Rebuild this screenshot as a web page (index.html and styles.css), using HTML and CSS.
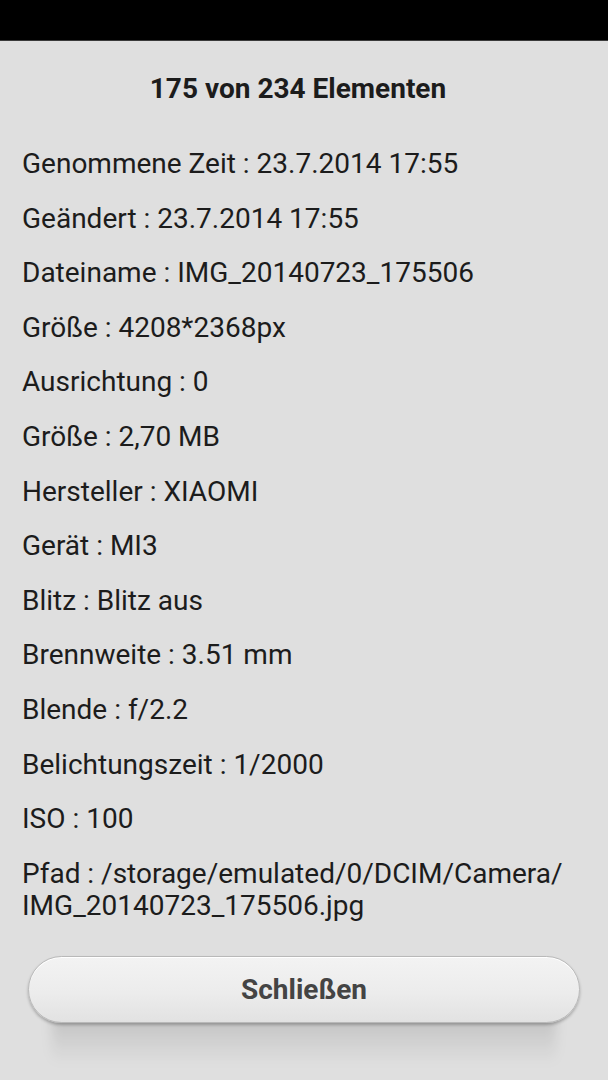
FILE: index.html
```html
<!DOCTYPE html>
<html lang="de">
<head>
  <meta charset="UTF-8" />
  <meta name="viewport" content="width=device-width, initial-scale=1" />
  <title>Details</title>
  <link rel="stylesheet" href="styles.css">
</head>
<body>
  <div class="status-bar"></div>
  <main class="dialog">
    <h1 class="title">175 von 234 Elementen</h1>
    <ul class="details">
      <li>Genommene Zeit : 23.7.2014 17:55</li>
      <li>Geändert : 23.7.2014 17:55</li>
      <li>Dateiname : IMG_20140723_175506</li>
      <li>Größe : 4208*2368px</li>
      <li>Ausrichtung : 0</li>
      <li>Größe : 2,70 MB</li>
      <li>Hersteller : XIAOMI</li>
      <li>Gerät : MI3</li>
      <li>Blitz : Blitz aus</li>
      <li>Brennweite : 3.51 mm</li>
      <li>Blende : f/2.2</li>
      <li>Belichtungszeit : 1/2000</li>
      <li>ISO : 100</li>
      <li>Pfad : /storage/emulated/0/DCIM/Camera/<br>IMG_20140723_175506.jpg</li>
    </ul>
    <div class="actions">
      <button class="close-btn" type="button">Schließen</button>
    </div>
  </main>
</body>
</html>
```

FILE: styles.css
```css
:root {
  --bg-color: #dfdfdf;
  --text-color: #1c1c1c;
  --button-text: #444444;
}

html, body {
  margin: 0;
  padding: 0;
  height: 100%;
}

body {
  width: 608px;
  height: 1080px;
  overflow: hidden;
  font-family: Roboto, "Liberation Sans", sans-serif;
  background-color: var(--bg-color);
  color: var(--text-color);
}

.status-bar {
  height: 40px;
  background: #000;
  border-bottom: 1px solid #3a3a3a;
}

.dialog {
  padding: 0 22px;
}

.title {
  margin: 0;
  padding: 30px 12px 0 0;
  font-size: 28px;
  line-height: 36px;
  font-weight: 700;
  text-align: center;
}

.details {
  list-style: none;
  margin: 0;
  padding: 0;
  padding-top: 41px;
}

.details li {
  font-size: 28px;
  line-height: 32px;
  margin-bottom: 22.6px;
}

.actions {
  position: relative;
  padding: 12px 6px 0;
}

/* soft shadow under the button */
.actions::after {
  content: "";
  position: absolute;
  left: 30px;
  right: 30px;
  top: 68px;
  height: 52px;
  background: linear-gradient(to bottom, rgba(0, 0, 0, 0.14), rgba(0, 0, 0, 0));
  filter: blur(6px);
  z-index: 0;
}

.close-btn {
  position: relative;
  z-index: 1;
  display: block;
  width: 100%;
  height: 67px;
  border-radius: 34px;
  border: 1px solid #b9b9b9;
  background: linear-gradient(to bottom, #f3f3f3 0%, #ececec 55%, #e2e2e2 100%);
  box-shadow: 0 2px 3px rgba(0, 0, 0, 0.25), inset 0 1px 0 #ffffff;
  font-family: Roboto, "Liberation Sans", sans-serif;
  font-size: 28px;
  font-weight: 700;
  color: var(--button-text);
  cursor: pointer;
}
```
